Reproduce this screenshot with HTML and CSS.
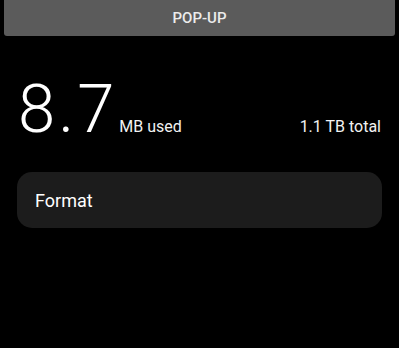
FILE: index.html
```html
<!DOCTYPE html>
<html lang="en">
<head>
  <meta charset="UTF-8" />
  <meta name="viewport" content="width=device-width, initial-scale=1.0"/>
  <title>Storage</title>
  <link rel="stylesheet" href="styles.css">
</head>
<body>

<button class="popup-btn">POP-UP</button>

<section class="usage">
  <div class="used">
    <span class="used-value">8.7</span>
    <span class="used-unit">MB used</span>
  </div>
  <span class="total">1.1 TB total</span>
</section>

<div class="card">
  <span>Format</span>
</div>

</body>
</html>
```

FILE: styles.css
```css
body {
  margin: 0;
  font-family: Roboto, 'Noto Sans', sans-serif;
  background: #000;
  color: #fff;
}

.popup-btn {
  display: block;
  width: calc(100% - 8px);
  height: 36px;
  margin: 0 4px;
  background: #5b5b5b;
  color: #ececec;
  border: none;
  border-radius: 0 0 3px 3px;
  font-family: Roboto, sans-serif;
  font-size: 15px;
  font-weight: 500;
  padding: 0;
}

/* Usage row */
.usage {
  display: flex;
  justify-content: space-between;
  align-items: baseline;
  padding: 0 18px;
  margin-top: 40px;
  line-height: 1;
}

.used {
  display: flex;
  align-items: baseline;
  gap: 2px;
}

.used-value {
  font-size: 67px;
  font-weight: 300;
  letter-spacing: 3px;
}

.used-unit,
.total {
  font-size: 16px;
  color: #f2f2f2;
}

/* Format card */
.card {
  margin: 29px 17px 0;
  height: 56px;
  background: #1c1c1c;
  border-radius: 15px;
  display: flex;
  align-items: center;
  padding: 0 18px;
  font-size: 18px;
}
```
